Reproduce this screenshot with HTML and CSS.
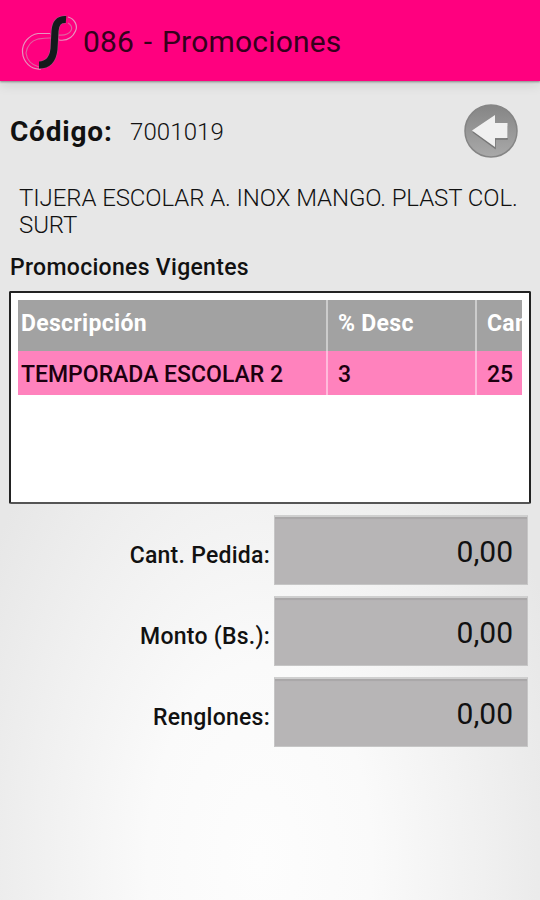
FILE: index.html
```html
<!DOCTYPE html>
<html lang="es">
	<head>
		<meta charset="UTF-8">
		<title>086 - Promociones</title>
		<link rel="stylesheet" href="styles.css">
	</head>
	<body>
		<header class="bar">
			<svg class="logo" width="60" height="60" viewBox="0 0 60 60" fill="none">
				<path class="loop" d="M47 6C54 8 57 15 54.500 20C51 28 45 30 38 29" />
				<path class="loop in" d="M38 28C30 26 24 27 17 28C9 30 6 36 5 42C6 50 11 54 18 56" />
				<path class="loop in" d="M47 12C52 15 52 20 46 23C40 26 35 23 29 23" />
				<path class="loop" d="M29 22.500H17C8 24 1 32 1.500 41C2 51 10 59 20 58" />
				<path class="edge" d="M45 8.500C38 8 34.500 12 34 20L33 38C32 47 28 54 18 54" />
				<path class="stroke" d="M45 8.500C38 8 34.500 12 34 20L33 38C32 47 28 54 18 54" />
			</svg>
			<h1>086 - Promociones</h1>
		</header>
		<main>
			<div class="code">
				<b>Código:</b>
				<span>7001019</span>
				<svg class="back" width="56" height="56" viewBox="0 0 56 56">
					<defs>
						<linearGradient id="gray" x1="0" y1="0" x2="0" y2="1">
							<stop offset="0" stop-color="#858585" />
							<stop offset="1" stop-color="#a9a9a9" />
						</linearGradient>
					</defs>
					<circle cx="28" cy="28" r="26" fill="url(#gray)" stroke="#858585" stroke-width="1.5" />
					<path d="M10 29L32 45V36H44V23" fill="none" stroke="#777" stroke-width="1.500" />
					<path d="M9 27.500L32 12V20H44.500V35H32V44Z" fill="#f0f0f0" />
				</svg>
			</div>
			<p class="product">TIJERA ESCOLAR A. INOX MANGO. PLAST COL.<br>SURT</p>
			<h2>Promociones Vigentes</h2>
			<div class="box">
				<div class="list">
					<div class="row head">
						<div>Descripción</div>
						<div>% Desc</div>
						<div>Cant</div>
					</div>
					<div class="row item">
						<div>TEMPORADA ESCOLAR 2</div>
						<div>3</div>
						<div>25</div>
					</div>
				</div>
			</div>
			<div class="totals">
				<label>Cant. Pedida:</label>
				<div class="value">0,00</div>
				<label>Monto (Bs.):</label>
				<div class="value">0,00</div>
				<label>Renglones:</label>
				<div class="value">0,00</div>
			</div>
		</main>
	</body>
</html>
```
FILE: styles.css
```css
* {
	box-sizing: border-box;
}
body {
	margin: 0;
	height: 900px;
	overflow: hidden;
	font-family: Roboto, "Liberation Sans", sans-serif;
	color: #111;
	background: radial-gradient(ellipse 320px 560px at 260px 860px, #fdfdfd 0%, #fafafa 35%, #f0f0f0 70%, #e7e7e7 100%);
}
.bar {
	display: flex;
	align-items: center;
	height: 81px;
	padding-left: 21px;
	background-color: #ff007f;
	box-shadow: 0 1px 2px #888, 0 3px 12px rgba(0, 0, 0, 0.12);
}
.bar h1 {
	margin: 2px 0 0 2px;
	font-size: 30px;
	font-weight: 400;
	letter-spacing: 0.2px;
	word-spacing: 2px;
	color: #35001c;
}
.logo .loop {
	stroke: #e795bf;
	stroke-width: 1.2;
}
.logo .in {
	stroke: #e0609f;
}
.logo .edge {
	stroke: #b5538a;
	stroke-width: 8;
}
.logo .stroke {
	stroke: #141a1c;
	stroke-width: 7;
}
main {
	padding: 0 9px;
}
.code {
	display: flex;
	align-items: center;
	height: 100px;
	padding-left: 1px;
}
.code b {
	width: 120px;
	padding-top: 1px;
	font-size: 28px;
	letter-spacing: 0.8px;
}
.code span {
	padding-top: 1px;
	font-size: 24px;
	font-weight: 300;
	letter-spacing: 0.1px;
}
.back {
	margin: 0 12px 0 auto;
}
.product {
	margin: 4px 0 0 10px;
	font-size: 24px;
	line-height: 27px;
	font-weight: 300;
	letter-spacing: -0.08px;
	white-space: nowrap;
}
h2 {
	margin: 14px 0 8px 1px;
	font-size: 23px;
	line-height: 30px;
	font-weight: 500;
	letter-spacing: 0.3px;
}
.box {
	height: 213px;
	padding: 7px;
	border: 2px solid #222;
	border-bottom-color: #555;
	border-radius: 2px;
	background-color: #fff;
}
.list {
	overflow: hidden;
}
.row {
	display: grid;
	grid-template-columns: 308px 149px 149px;
	font-size: 23px;
}
.row div {
	display: flex;
	align-items: center;
	padding-left: 10px;
	border-left: 2px solid rgba(255, 255, 255, 0.45);
}
.row div:first-child {
	padding-left: 3px;
	border-left: 0;
}
.head {
	height: 51px;
	font-weight: 700;
	letter-spacing: 0.3px;
	color: #fff;
	background-color: #a2a2a2;
}
.head div {
	padding-bottom: 4px;
}
.item {
	height: 44px;
	font-weight: 500;
	color: #1c000f;
	background-color: #ff82bd;
}
.item div {
	padding-top: 2px;
}
.totals {
	display: grid;
	grid-template-columns: 261px 254px;
	row-gap: 11px;
	column-gap: 4px;
	margin-top: 11px;
}
.totals label {
	height: 70px;
	padding-top: 10px;
	font-size: 23px;
	line-height: 62px;
	font-weight: 500;
	letter-spacing: 0.25px;
	text-align: right;
}
.value {
	height: 70px;
	padding-right: 14px;
	border: 1px solid #c6c6c6;
	border-top: 2px solid #cfcfcf;
	background-color: #b7b5b6;
	box-shadow: inset 0 2px 1px #a9a7a8;
	font-size: 30px;
	line-height: 70px;
	text-align: right;
}
```
